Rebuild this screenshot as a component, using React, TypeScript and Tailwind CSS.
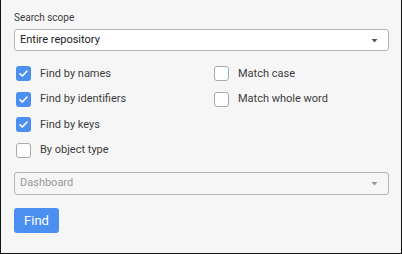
import React from "react";

const Check: React.FC<{ checked?: boolean; label: string }> = ({ checked, label }) => (
  <label className="flex items-center h-[25.5px] gap-[9px]">
    {checked ? (
      <span className="w-[15px] h-[15px] rounded-[3px] bg-[#4b8ff0] flex items-center justify-center">
        <svg width="11" height="11" viewBox="0 0 11 11" fill="none">
          <path d="M2 5.8 L4.3 8 L9 3" stroke="white" strokeWidth="1.6" strokeLinecap="round" strokeLinejoin="round" />
        </svg>
      </span>
    ) : (
      <span className="w-[15px] h-[15px] rounded-[3px] border border-[#a9a9a9] bg-white" />
    )}
    <span className="text-[11px] text-[#3c3c3c]">{label}</span>
  </label>
);

const Arrow: React.FC<{ color: string }> = ({ color }) => (
  <svg width="7" height="5" viewBox="0 0 7 5">
    <path d="M0.5 1 L6.5 1 L3.5 4.5 Z" fill={color} />
  </svg>
);

export default function App() {
  return (
    <div
      className="w-[402px] h-[254px] bg-[#f6f6f6] border-x border-b border-[#111] px-[13px] pt-[12px]"
      style={{ fontFamily: "Roboto, 'Liberation Sans', sans-serif" }}
    >
      <div className="text-[10px] text-[#3c3c3c] leading-[12px]">Search scope</div>
      <div className="mt-[5px] h-[22px] w-[375px] bg-white border border-[#b4b4b4] rounded-[3px] flex items-center justify-between pl-[5px] pr-[10px]">
        <span className="text-[11px] text-[#222]">Entire repository</span>
        <Arrow color="#555" />
      </div>
      <div className="mt-[10px] flex pl-[2px]">
        <div className="w-[198px] flex flex-col">
          <Check checked label="Find by names" />
          <Check checked label="Find by identifiers" />
          <Check checked label="Find by keys" />
          <Check label="By object type" />
        </div>
        <div className="flex flex-col">
          <Check label="Match case" />
          <Check label="Match whole word" />
        </div>
      </div>
      <div className="mt-[9px] h-[23px] w-[375px] bg-[#f6f6f6] border border-[#b4b4b4] rounded-[3px] flex items-center justify-between pl-[5px] pr-[10px]">
        <span className="text-[11px] text-[#999]">Dashboard</span>
        <Arrow color="#999" />
      </div>
      <button className="mt-[13px] h-[25px] w-[45px] rounded-[3px] bg-[#4b8ff0] text-white text-[13px] flex items-center justify-center">
        Find
      </button>
    </div>
  );
}
